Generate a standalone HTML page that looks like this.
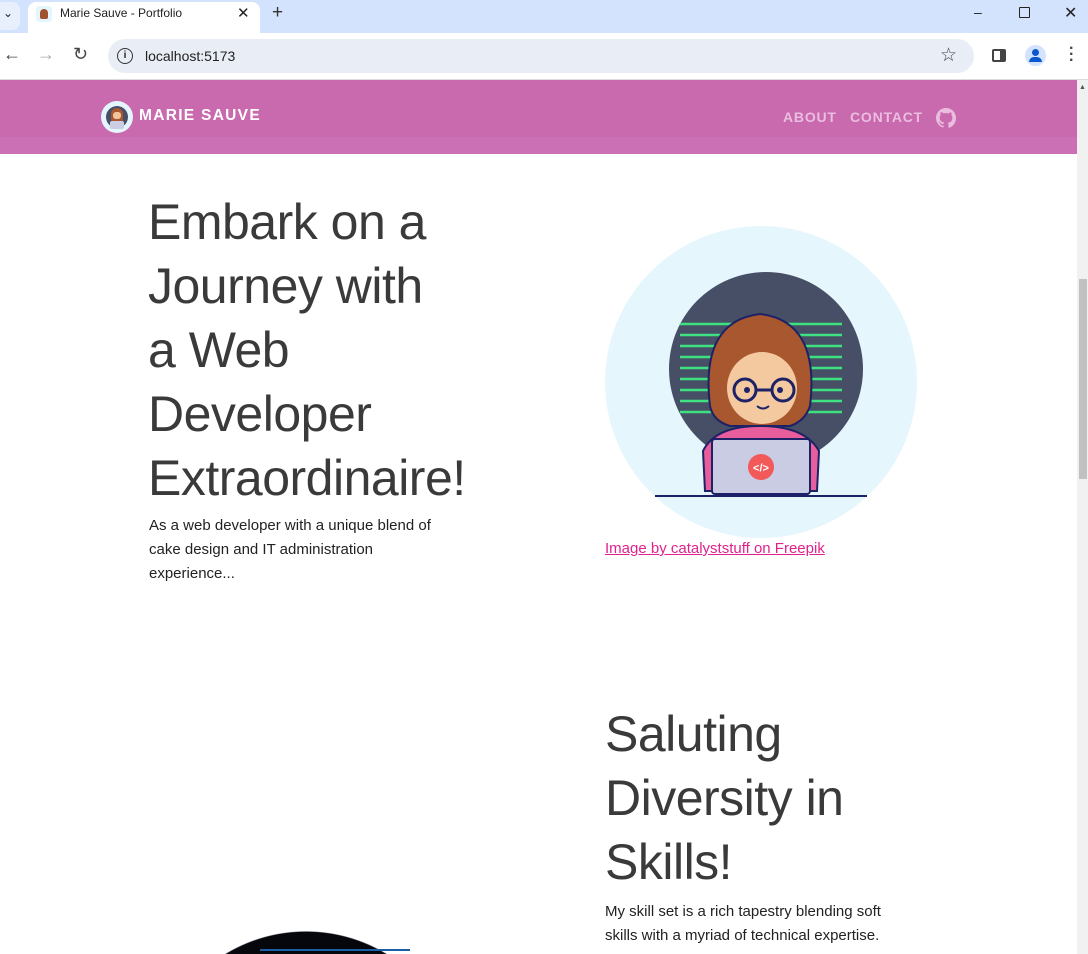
<!DOCTYPE html>
<html style="width:1088px;height:954px;overflow:hidden"><head><meta charset="utf-8"><style>
*{margin:0;padding:0;box-sizing:border-box}
body{width:1088px;height:954px;overflow:hidden;background:#fff;font-family:"Liberation Sans",sans-serif;position:relative;color:#222}
.a{position:absolute}
.h{font-size:50px;font-weight:300;line-height:64px;color:#3a3a3a;letter-spacing:-0.5px;white-space:nowrap}
.p{font-size:15px;line-height:24px;color:#222;white-space:nowrap}
</style></head><body>
<div class="a" style="left:0;top:0;width:1088px;height:33px;background:#d3e3fd"></div>
<div class="a" style="left:0;top:2px;width:20px;height:28px;background:#e8f0fe;border-radius:0 8px 8px 0"></div>
<div class="a" style="left:3px;top:6px;font-size:12px">&#8964;</div>
<div class="a" style="left:28px;top:2px;width:232px;height:31px;background:#fff;border-radius:8px 8px 0 0"></div>
<div class="a" style="left:36px;top:6px;width:16px;height:16px;background:#e4f5fd;border-radius:3px"><div style="margin:3px 4px;width:8px;height:10px;background:#a0522d;border-radius:4px 4px 2px 2px"></div></div>
<div class="a" style="left:60px;top:6px;font-size:12px;color:#222">Marie Sauve - Portfolio</div>
<div class="a" style="left:237px;top:4px;font-size:15px">✕</div>
<div class="a" style="left:272px;top:2px;font-size:19px;color:#333">+</div>
<div class="a" style="left:974px;top:4px;font-size:14px">&#8211;</div>
<div class="a" style="left:1019px;top:7px;width:11px;height:11px;border:1.3px solid #222;border-radius:1px"></div>
<div class="a" style="left:1064px;top:3px;font-size:16px">✕</div>
<div class="a" style="left:0;top:33px;width:1088px;height:47px;background:#fff"></div>
<div class="a" style="left:3px;top:44px;font-size:18px;color:#444">&#8592;</div>
<div class="a" style="left:37px;top:44px;font-size:18px;color:#aaa">&#8594;</div>
<div class="a" style="left:73px;top:44px;font-size:18px;color:#444">&#8635;</div>
<div class="a" style="left:108px;top:39px;width:866px;height:34px;background:#e9edf6;border-radius:17px"></div>
<div class="a" style="left:117px;top:48px;width:16px;height:16px;border:1.6px solid #333;border-radius:50%;font-size:10px;text-align:center;line-height:13px;font-weight:bold">i</div>
<div class="a" style="left:145px;top:48px;font-size:14px;color:#222">localhost:5173</div>
<div class="a" style="left:940px;top:44px;font-size:19px;color:#444">☆</div>
<div class="a" style="left:992px;top:49px;width:14px;height:13px;border:2px solid #444;border-right-width:6px;border-radius:2px"></div>
<div class="a" style="left:1025px;top:45px;width:21px;height:21px;background:#d3e3fd;border-radius:50%"><div style="margin:4px auto 0;width:7px;height:7px;background:#0b57d0;border-radius:50%"></div><div style="margin:1px auto 0;width:13px;height:5px;background:#0b57d0;border-radius:6px 6px 0 0"></div></div>
<div class="a" style="left:1069px;top:46px;font-size:16px;line-height:6px;color:#444;font-weight:bold">·<br>·<br>·</div>
<div class="a" style="left:0;top:79px;width:1088px;height:1px;background:#dcdcdc"></div>
<div class="a" style="left:1077px;top:80px;width:11px;height:874px;background:#f1f1f1"></div>
<div class="a" style="left:1079px;top:279px;width:8px;height:200px;background:#c1c1c1"></div>
<div class="a" style="left:1079px;top:84px;font-size:7px;color:#555">▲</div>
<div class="a" style="left:0;top:80px;width:1077px;height:57px;background:#c969ae"></div>
<div class="a" style="left:0;top:137px;width:1077px;height:17px;background:#cb70b4"></div>
<div class="a" style="left:101px;top:101px;width:32px;height:32px;background:#e4f5fd;border-radius:50%;overflow:hidden">
<div style="position:absolute;left:5px;top:5px;width:22px;height:22px;background:#474f67;border-radius:50%"></div>
<div style="position:absolute;left:10px;top:7px;width:12px;height:14px;background:#a9572e;border-radius:6px 6px 3px 3px"></div>
<div style="position:absolute;left:12px;top:11px;width:8px;height:7px;background:#f3c49b;border-radius:3px"></div>
<div style="position:absolute;left:9px;top:20px;width:14px;height:8px;background:#cbcde3;border-radius:2px"></div></div>
<div class="a" style="left:139px;top:107px;font-size:15.5px;font-weight:bold;color:#fff;letter-spacing:1.3px">MARIE SAUVE</div>
<div class="a" style="left:783px;top:109px;font-size:14px;font-weight:bold;color:#ebbddf;letter-spacing:0.8px">ABOUT</div>
<div class="a" style="left:850px;top:109px;font-size:14px;font-weight:bold;color:#ebbddf;letter-spacing:0.8px">CONTACT</div>
<svg class="a" style="left:936px;top:108px" width="20" height="20" viewBox="0 0 16 16"><path fill="#ebbddf" d="M8 0C3.58 0 0 3.58 0 8c0 3.54 2.29 6.53 5.47 7.59.4.07.55-.17.55-.38v-1.33c-2.23.48-2.7-1.07-2.7-1.07-.36-.92-.89-1.17-.89-1.17-.73-.5.06-.49.06-.49.8.06 1.23.83 1.23.83.71 1.22 1.87.87 2.33.66.07-.52.28-.87.51-1.07-1.78-.2-3.64-.89-3.64-3.95 0-.87.31-1.59.82-2.15-.08-.2-.36-1.02.08-2.12 0 0 .67-.21 2.2.82A7.6 7.6 0 0 1 8 4.1c.68 0 1.36.09 2 .27 1.53-1.04 2.2-.82 2.2-.82.44 1.1.16 1.92.08 2.12.51.56.82 1.27.82 2.15 0 3.07-1.87 3.75-3.65 3.95.29.25.54.73.54 1.48v2.2c0 .21.15.46.55.38A8 8 0 0 0 16 8c0-4.42-3.58-8-8-8z"/></svg>
<div class="a h" style="left:148px;top:190px">Embark on a<br>Journey with<br>a Web<br>Developer<br>Extraordinaire!</div>
<div class="a p" style="left:149px;top:514px">As a web developer with a unique blend of<br>cake design and IT administration<br>experience...</div>
<svg class="a" style="left:605px;top:226px" width="312" height="312" viewBox="0 0 312 312">
<circle cx="156" cy="156" r="156" fill="#e5f6fd"/>
<circle cx="161" cy="143" r="97" fill="#474f67"/>
<g stroke="#3ee17f" stroke-width="2.5">
<line x1="75" y1="98" x2="237" y2="98"/><line x1="75" y1="109" x2="237" y2="109"/><line x1="75" y1="120" x2="237" y2="120"/><line x1="75" y1="131" x2="237" y2="131"/><line x1="75" y1="142" x2="237" y2="142"/><line x1="75" y1="153" x2="237" y2="153"/><line x1="75" y1="164" x2="237" y2="164"/><line x1="75" y1="175" x2="237" y2="175"/><line x1="75" y1="186" x2="237" y2="186"/></g>
<path d="M100 265 L98 225 Q110 200 155 200 Q200 200 214 225 L212 265Z" fill="#e85d9c" stroke="#1d2266" stroke-width="2"/>
<path d="M105 180 Q95 95 155 88 Q215 95 205 180 Q200 195 185 200 L125 200 Q108 195 105 180Z" fill="#a9572e" stroke="#1d2266" stroke-width="2"/>
<ellipse cx="157" cy="162" rx="35" ry="36" fill="#f5c9a0"/>
<path d="M120 150 Q125 110 160 106 Q198 112 200 150 L198 150 Q190 118 170 118 L150 118 Q128 120 122 150Z" fill="#a9572e"/>
<g fill="none" stroke="#1d2266" stroke-width="3"><circle cx="140" cy="164" r="11"/><circle cx="178" cy="164" r="11"/><line x1="151" y1="164" x2="167" y2="164"/></g>
<circle cx="142" cy="164" r="3" fill="#1d2266"/><circle cx="175" cy="164" r="3" fill="#1d2266"/>
<path d="M152 180 Q158 185 164 180" stroke="#1d2266" stroke-width="2" fill="none"/>
<rect x="107" y="213" width="98" height="55" rx="3" fill="#c9cce3" stroke="#1d2266" stroke-width="2"/>
<circle cx="156" cy="241" r="13" fill="#f25a5a"/>
<text x="156" y="245.5" font-size="11" fill="#fff" text-anchor="middle" font-family="Liberation Sans" font-weight="bold">&lt;/&gt;</text>
<line x1="50" y1="270" x2="262" y2="270" stroke="#1d2266" stroke-width="2"/>
</svg>
<div class="a" style="left:605px;top:540px;font-size:15px;color:#e0228d;text-decoration:underline">Image by catalyststuff on Freepik</div>
<div class="a h" style="left:605px;top:702px">Saluting<br>Diversity in<br>Skills!</div>
<div class="a p" style="left:605px;top:900px">My skill set is a rich tapestry blending soft<br>skills with a myriad of technical expertise.</div>
<div class="a" style="left:150px;top:931px;width:312px;height:23px;background:radial-gradient(circle 156px at 156px 156px,#05070c 155px,transparent 156px)"></div>
<div class="a" style="left:260px;top:949px;width:150px;height:2px;background:#1b5ea8"></div>
</body></html>
